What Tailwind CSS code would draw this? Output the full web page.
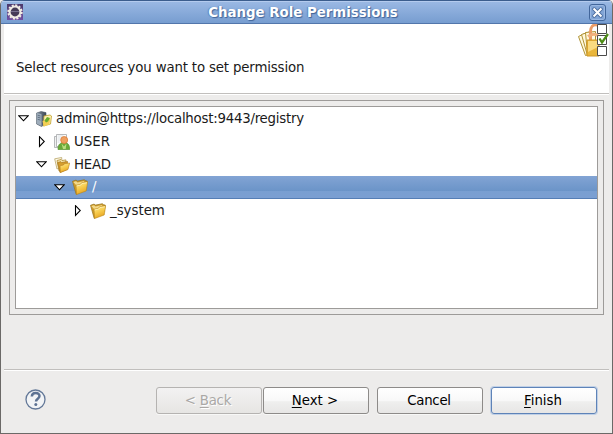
<!DOCTYPE html>
<html lang="en">
<head>
<meta charset="utf-8">
<title>Change Role Permissions</title>
<script src="https://cdn.jsdelivr.net/npm/@tailwindcss/browser@4"></script>
</head>
<body class="bg-[#edeceb] overflow-hidden">
<svg width="0" height="0" class="absolute">
  <defs>
    <linearGradient id="gold" x1="0" y1="0" x2="0.4" y2="1"><stop offset="0" stop-color="#fdeaa0"/><stop offset=".5" stop-color="#f8cf52"/><stop offset="1" stop-color="#e8a41f"/></linearGradient>
    <linearGradient id="steel" x1="0" x2="1"><stop offset="0" stop-color="#8794a3"/><stop offset="1" stop-color="#3c4754"/></linearGradient>
    <linearGradient id="purple" x1="0" y1="0" x2="0" y2="1"><stop offset="0" stop-color="#4b3a6b"/><stop offset="1" stop-color="#7151a4"/></linearGradient>
    <symbol id="folder" viewBox="0 0 16 16">
      <path d="M.5 2.300 4 1.100l1.600 1L12.500.7l.8 1 2 .4L14 9 4.200 15.400Z" fill="#cf9c2b" stroke="#94731f" stroke-width=".7"/>
      <path d="M1.300 3 4 2.200l1.600 1.200L12.300 2 11 5 5 7Z" fill="#f3d98a"/>
      <path d="m4 6.200 4.300-.8 1.200-1.600 6.200-1L14.200 12l-9.600 3.500Z" fill="url(#gold)" stroke="#b88619" stroke-width=".6"/>
      <path d="m4.700 6.900 4-.8 1.200-1.500 5-.9" stroke="#fff3ba" stroke-width=".8" fill="none"/>
    </symbol>
    <symbol id="down" viewBox="0 0 11 7"><path d="M.9.8h9.2L5.5 5.8Z" fill="#fff" stroke="#000" stroke-width="1.1"/></symbol>
    <symbol id="right" viewBox="0 0 7 12"><path d="M1.500.7v9.600L6.300 5.500Z" fill="#fff" stroke="#000" stroke-width="1.1"/></symbol>
  </defs>
</svg>
<main class="relative flex h-[434px] w-[613px] flex-col overflow-hidden rounded-t-[5px] border-x border-b border-[#6b6967] bg-[#edeceb] font-['DejaVu_Sans',sans-serif] text-[13.33px] leading-[16px] text-[#1a1a1a]">
  <header class="flex h-6 shrink-0 items-center border-t border-b border-t-[#3b5d8d] border-b-[#5276ab] bg-linear-to-b from-[#9bb9e4] to-[#779dd0] pl-[6px] pr-[6px] shadow-[inset_0_1px_0_#b4cbee]">
    <svg class="size-4 shrink-0" viewBox="0 0 16 16">
      <path d="M0 0h16v16H0z" fill="url(#purple)"/>
      <circle cx="8" cy="8" r="6.700" fill="none" stroke="#f3eee3" stroke-width="2" stroke-dasharray="2.100 1.408"/>
      <circle cx="8" cy="8" r="5.400" fill="#453b57" stroke="#efebe4" stroke-width="2"/>
      <path d="M4 7.500h8" stroke="#77718f" stroke-width="1"/>
    </svg>
    <h1 class="flex-1 pt-[2px] pr-[6px] text-center text-[13.33px] font-bold text-white [text-shadow:1px_1px_1px_#406397,-1px_0_1px_#5f85bc]">Change Role Permissions</h1>
    <button class="flex size-[17px] shrink-0 items-center justify-center rounded-[3px] border border-[#42669b] bg-[#82a5d6] shadow-[inset_0_0_0_1px_#9ab8e2]" aria-label="Close">
      <svg class="size-[11px]" viewBox="0 0 11 11"><path d="m2.200 2.200 6.600 6.600m0-6.600L2.200 8.800" stroke="#47699b" stroke-width="3.800" stroke-linecap="round"/><path d="m2.300 2.300 6.400 6.400m0-6.400L2.300 8.700" stroke="#fff" stroke-width="2.100" stroke-linecap="square"/></svg>
    </button>
  </header>
  <section class="mx-[3px] flex h-[71px] shrink-0 justify-between border-b border-white bg-white pl-3 shadow-[inset_0_-1px_0_#c1bfbd]">
    <p class="pt-[36px] whitespace-nowrap tracking-[-0.155px]">Select resources you want to set permission</p>
    <svg class="h-[33px] w-[32px] shrink-0" viewBox="0 0 32 33">
      <g stroke="#b09336" stroke-width="1" fill="#fff9dc">
        <path d="m1.500 12.500 8-4 6 21-7 2Z"/><path d="m4.500 10.500 9-3 4 22-7 2Z"/><path d="m8.500 8.500 10-1v24l-8-1Z"/>
      </g>
      <path d="M13.500 16V7.500c0-9 10.500-9 10.500 0" fill="none" stroke="#eb9c66" stroke-width="3"/>
      <path d="M11 12.500c4-3 7-3 10-1" fill="none" stroke="#f0b07c" stroke-width="3"/>
      <path d="M10 16h12v16H10Z" fill="#e9b63b" stroke="#cf9826"/><path d="M11 17h10v6l-10 5Z" fill="#f9da80"/>
      <g fill="#fff" stroke="#4b4b4b"><path d="M20.500 .5h9v9h-9zM20.500 11.500h9v9h-9zM20.500 22.500h9v9h-9z"/></g>
      <path d="m22.500 14.500 2.500 4 6-8.500" fill="none" stroke="#4e8d17" stroke-width="2.300"/>
    </svg>
  </section>
  <section class="mx-2 mt-[5px] flex h-[215px] shrink-0 border border-[#9d9b99] p-[5px]">
    <ul class="w-full border border-[#9d9b99] bg-white">
      <li class="flex h-[23px] items-center pl-[2px]"><svg class="h-[7px] w-[11px]"><use href="#down"/></svg>
        <svg class="ml-[7px] mr-1 size-4" viewBox="0 0 16 16">
          <path d="m.6 2 4.500-1.500L10 1.600v11L5.500 15.500.6 13Z" fill="url(#steel)" stroke="#4c5967" stroke-width=".6"/>
          <path d="m1 2 4.500 1.300v11.600L1 12.800Z" fill="#9eacba"/><path d="m1.600 4.200 3 .8m-3 1.200 3 .8m-3 1.300 3 .8" stroke="#566778" stroke-width=".8"/>
          <path d="m8 5 6-1 1.500 1-1 8-7 2Z" fill="#fff3b4" stroke="#bea02c" stroke-width=".8"/>
          <path d="m6.500 10 3-1 1-1 4-.5-1.300 6-5.500 2Z" fill="#f3cf55"/><path d="m8.500 9.500 2.500-3.500 3 1-2 3.500-2 1Z" fill="#67ac2b"/>
        </svg><span class="tracking-[-0.24px]">admin@https://localhost:9443/registry</span></li>
      <li class="flex h-[23px] items-center pl-[22px]"><svg class="h-3 w-[7px]"><use href="#right"/></svg>
        <svg class="ml-[9px] mr-1 size-4" viewBox="0 0 16 16">
          <path d="M.5 2.500h8v11h-8z" fill="#f0f1f1" stroke="#a4a7a9" stroke-width=".8"/><path d="M2.500.5h10v12h-10z" fill="#fff" stroke="#a4a7a9" stroke-width=".8"/><path d="M3.500 2h6M3.500 4h4M3.500 6h3M3.500 8h2" stroke="#c5cfd4" stroke-width=".7"/>
          <path d="M4 15.500c0-5 2-7 6-7s5.700 2.500 5.700 7Z" fill="#69a938" stroke="#5a9433" stroke-width=".7"/><path d="m7.500 9.500 2.500 3 2.500-3-.8 5.500H9Z" fill="#b9dd80"/>
          <circle cx="10.200" cy="6" r="3.500" fill="#efa060" stroke="#db7c38" stroke-width=".8"/>
        </svg><span>USER</span></li>
      <li class="flex h-[23px] items-center pl-[20px]"><svg class="h-[7px] w-[11px]"><use href="#down"/></svg>
        <svg class="ml-[7px] mr-1 size-4" viewBox="0 0 16 16">
          <path d="m.7 1.800 7-1.300L8 9.500l-5 2.500Z" fill="#fffbe9" stroke="#b9a568" stroke-width=".8"/><path d="m3 3.500 4-1 1 1 4-.6-1 9L5 14Z" fill="#f8e7ac" stroke="#b18b34" stroke-width=".8"/>
          <path d="m3.700 5.500 3.200-.8.8.8 5.800-1-.5 8-7 3Z" fill="#d59e2e" stroke="#a5731b" stroke-width=".7"/><path d="m6 8.800 3.500-.8.800-1.300 5.400-.7L14 12.500l-7.600 3Z" fill="url(#gold)" stroke="#bb8220" stroke-width=".6"/>
        </svg><span class="tracking-[-0.25px]">HEAD</span></li>
      <li class="flex h-[23px] items-center border-b border-[#557eb5] bg-[linear-gradient(#82a4d4_0,#6b94c8_15px,#799fd1_15px,#7b9fd2_22px)] pl-[38px] text-white"><svg class="h-[7px] w-[11px]"><use href="#down"/></svg><svg class="ml-[7px] mr-1 size-4"><use href="#folder"/></svg><span>/</span></li>
      <li class="flex h-[23px] items-center pl-[58px]"><svg class="h-3 w-[7px]"><use href="#right"/></svg><svg class="ml-[9px] mr-1 size-4"><use href="#folder"/></svg><span>_system</span></li>
    </ul>
  </section>
  <footer class="mx-[3px] mt-[54px] flex flex-1 items-start border-t border-[#c1bfbd] shadow-[inset_0_1px_0_#fff] pt-[17px] pl-[21px]">
    <svg class="mt-[1.500px] ml-[-.5px] mr-[.5px] size-[21px]" viewBox="0 0 21 21" role="img" aria-label="Help"><circle cx="10.500" cy="10.500" r="9.500" fill="#f2f4f6" stroke="#637898" stroke-width="1.300"/><path d="M6.800 7.500c.2-4.500 7.700-4.500 7.700-.4 0 2.600-3.500 2.500-3.500 5.300" fill="none" stroke="#5d7293" stroke-width="2.500"/><circle cx="10.800" cy="15.500" r="1.500" fill="#5d7293"/></svg>
    <button disabled class="ml-[110px] h-[27px] w-[106px] rounded-[3px] border border-[#b5b3b1] bg-linear-to-b from-[#f3f2f2] to-[#e6e5e3] pr-[2px] text-[#aaa8a6] tracking-[-0.25px] shadow-[0_1px_0_#f8f8f7] [text-shadow:1px_1px_0_#fff]">&lt; <u class="underline-offset-2">B</u>ack</button>
    <button class="ml-[1px] h-[27px] w-[106px] rounded-[3px] border border-[#8d8b89] bg-[linear-gradient(#fff_0,#f8f8f8_50%,#efefee_55%,#e7e6e5)] pr-[2px] text-black shadow-[0_1px_0_#f8f8f7]"><u class="underline-offset-2">N</u>ext &gt;</button>
    <button class="ml-2 h-[27px] w-[106px] rounded-[3px] border border-[#8d8b89] bg-[linear-gradient(#fff_0,#f8f8f8_50%,#efefee_55%,#e7e6e5)] pr-[2px] text-black tracking-[-0.25px] shadow-[0_1px_0_#f8f8f7]">Cancel</button>
    <button class="ml-2 h-[27px] w-[106px] rounded-[3px] border border-[#5e83b8] bg-[linear-gradient(#fff_0,#f8f8f8_50%,#efefee_55%,#e7e6e5)] pr-[2px] text-black shadow-[0_0_0_1px_#c0d0e6]"><u class="underline-offset-2">F</u>inish</button>
  </footer>
</main>
</body>
</html>
